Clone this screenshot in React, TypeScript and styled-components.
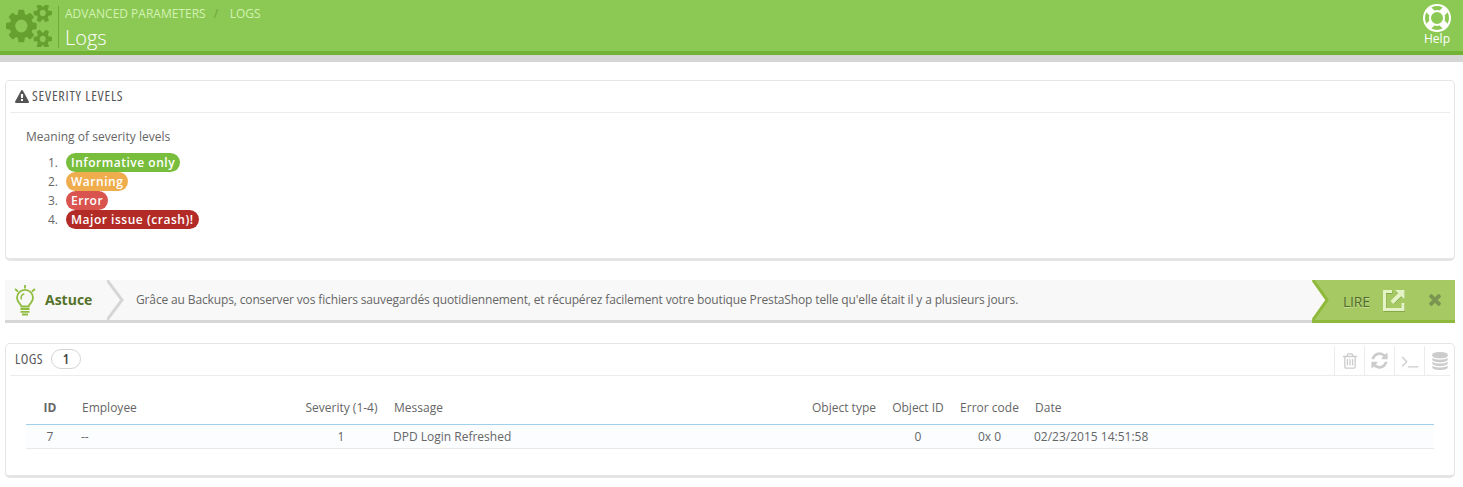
import React from "react";
import styled, { createGlobalStyle } from "styled-components";

const GlobalStyle = createGlobalStyle`
  *, *::before, *::after { box-sizing: border-box; }
  body {
    margin: 0;
    background: #fff;
    color: #666;
    font: 12px/19px "Open Sans", "Liberation Sans", sans-serif;
  }
`;

const COG =
  "M896 960q0-106-75-181t-181-75-181 75-75 181 75 181 181 75 181-75 75-181zm768 512q0-52-38-90t-90-38-90 38-38 90q0 53 37.5 90.5t90.5 37.5 90.5-37.5 37.5-90.5zm0-1024q0-52-38-90t-90-38-90 38-38 90q0 53 37.5 90.5t90.5 37.5 90.5-37.5 37.5-90.5zm-384 421v185q0 10-7 19.5t-16 10.5l-155 24q-11 35-32 76 34 48 90 115 7 11 7 20 0 12-7 19-23 30-82.5 89.5t-78.5 59.5q-11 0-21-7l-115-90q-37 19-77 31-11 108-23 155-7 24-30 24h-186q-11 0-20-7.5t-10-17.5l-23-153q-34-10-75-31l-118 89q-7 7-20 7-11 0-21-8-144-133-144-160 0-9 7-19 10-14 41-53t47-61q-23-44-35-82l-152-24q-10-1-17-9.5t-7-19.5v-185q0-10 7-19.5t16-10.5l155-24q11-35 32-76-34-48-90-115-7-11-7-20 0-12 7-20 22-30 82-89t79-59q11 0 21 7l115 90q34-18 77-32 11-108 23-154 7-24 30-24h186q11 0 20 7.5t10 17.5l23 153q34 10 75 31l118-89q8-7 20-7 11 0 21 8 144 133 144 160 0 8-7 19-12 16-42 54t-45 60q23 48 34 82l152 23q10 2 17 10.5t7 19.5zm640 533v140q0 16-149 31-12 27-30 52 51 113 51 138 0 4-4 7-122 71-124 71-8 0-46-47t-52-68q-20 2-30 2t-30-2q-14 21-52 68t-46 47q-2 0-124-71-4-3-4-7 0-25 51-138-18-25-30-52-149-15-149-31v-140q0-16 149-31 13-29 30-52-51-113-51-138 0-4 4-7 4-2 35-20t59-34 30-16q8 0 46 46.5t52 67.5q20-2 30-2t30 2q51-71 92-112l6-2q4 0 124 70 4 3 4 7 0 25-51 138 17 23 30 52 149 15 149 31zm0-1024v140q0 16-149 31-12 27-30 52 51 113 51 138 0 4-4 7-122 71-124 71-8 0-46-47t-52-68q-20 2-30 2t-30-2q-14 21-52 68t-46 47q-2 0-124-71-4-3-4-7 0-25 51-138-18-25-30-52-149-15-149-31v-140q0-16 149-31 13-29 30-52-51-113-51-138 0-4 4-7 4-2 35-20t59-34 30-16q8 0 46 46.5t52 67.5q20-2 30-2t30 2q51-71 92-112l6-2q4 0 124 70 4 3 4 7 0 25-51 138 17 23 30 52 149 15 149 31z";
const RING =
  "M896 0q182 0 348 71t286 191 191 286 71 348-71 348-191 286-286 191-348 71-348-71-286-191-191-286-71-348 71-348 191-286 286-191 348-71zm0 128q-190 0-361 90l194 194q82-28 167-28t167 28l194-194q-171-90-361-90zm-678 1129l194-194q-28-82-28-167t28-167l-194-194q-90 171-90 361t90 361zm678 407q190 0 361-90l-194-194q-82 28-167 28t-167-28l-194 194q171 90 361 90zm0-384q159 0 271.5-112.5t112.5-271.5-112.5-271.5-271.5-112.5-271.5 112.5-112.5 271.5 112.5 271.5 271.5 112.5zm484-217l194 194q90-171 90-361t-90-361l-194 194q28 82 28 167t-28 167z";
const WARNING =
  "M1024 1375v-190q0-14-9.5-23.5t-22.5-9.5h-192q-13 0-22.5 9.5t-9.5 23.5v190q0 14 9.5 23.5t22.5 9.5h192q13 0 22.5-9.5t9.5-23.5zm-2-374l18-459q0-12-10-19-13-11-24-11h-220q-11 0-24 11-10 7-10 21l17 457q0 10 10 16.5t24 6.5h185q14 0 23.5-6.5t10.5-16.5zm-14-934l768 1408q35 63-2 126-17 29-46.5 46t-63.5 17h-1536q-34 0-63.5-17t-46.5-46q-37-63-2-126l768-1408q17-31 47-49t65-18 65 18 47 49z";
const TRASH =
  "M704 736v576q0 14-9 23t-23 9h-64q-14 0-23-9t-9-23v-576q0-14 9-23t23-9h64q14 0 23 9t9 23zm256 0v576q0 14-9 23t-23 9h-64q-14 0-23-9t-9-23v-576q0-14 9-23t23-9h64q14 0 23 9t9 23zm256 0v576q0 14-9 23t-23 9h-64q-14 0-23-9t-9-23v-576q0-14 9-23t23-9h64q14 0 23 9t9 23zm128 724v-948h-896v948q0 22 7 40.5t14.5 27 10.5 8.5h832q3 0 10.5-8.5t14.5-27 7-40.5zm-672-1076h448l-48-117q-7-9-17-11h-317q-10 2-17 11zm928 32v64q0 14-9 23t-23 9h-96v948q0 83-47 143.5t-113 60.5h-832q-66 0-113-58.5t-47-141.5v-952h-96q-14 0-23-9t-9-23v-64q0-14 9-23t23-9h309l70-167q15-37 54-63t79-26h320q40 0 79 26t54 63l70 167h309q14 0 23 9t9 23z";
const REFRESH =
  "M1639 1056q0 5-1 7-64 268-268 434.5t-478 166.5q-146 0-282.5-55t-243.5-157l-129 129q-19 19-45 19t-45-19-19-45v-448q0-26 19-45t45-19h448q26 0 45 19t19 45-19 45l-137 137q71 66 161 102t187 36q134 0 250-65t186-179q11-17 53-117 8-23 30-23h192q13 0 22.5 9.5t9.5 22.5zm25-800v448q0 26-19 45t-45 19h-448q-26 0-45-19t-19-45 19-45l138-138q-148-137-349-137-134 0-250 65t-186 179q-11 17-53 117-8 23-30 23h-199q-13 0-22.5-9.5t-9.5-22.5v-7q65-268 270-434.5t480-166.5q146 0 284 55.5t245 156.5l130-129q19-19 45-19t45 19 19 45z";
const TERMINAL =
  "M649 983l-466 466q-10 10-23 10t-23-10l-50-50q-10-10-10-23t10-23l393-393-393-393q-10-10-10-23t10-23l50-50q10-10 23-10t23 10l466 466q10 10 10 23t-10 23zm1079 457v64q0 14-9 23t-23 9h-960q-14 0-23-9t-9-23v-64q0-14 9-23t23-9h960q14 0 23 9t9 23z";
const DISK =
  "q237 0 443-43t325-127v170q0 69-103 128t-280 93.5-385 34.5-385-34.5-280-93.5-103-128v-170q119 84 325 127t443 43z";
const DATABASE = `M896 768${DISK}M896 1536${DISK}M896 1152${DISK}M896 0q208 0 385 34.5t280 93.5 103 128v128q0 69-103 128t-280 93.5-385 34.5-385-34.5-280-93.5-103-128v-128q0-69 103-128t280-93.5 385-34.5z`;
const TIMES =
  "M1490 1322q0 40-28 68l-136 136q-28 28-68 28t-68-28l-294-294-294 294q-28 28-68 28t-68-28l-136-136q-28-28-28-68t28-68l294-294-294-294q-28-28-28-68t28-68l136-136q28-28 68-28t68 28l294 294 294-294q28-28 68-28t68 28l136 136q28 28 28 68t-28 68l-294 294 294 294q28 28 28 68z";

type GlyphProps = { d: string; box?: string; w: number; h: number };
const Svg = styled.svg`
  display: block;
  flex: none;
  fill: currentColor;
`;
const Glyph = ({ d, box = "0 0 1792 1792", w, h }: GlyphProps) => (
  <Svg width={w} height={h} viewBox={box} preserveAspectRatio="none">
    <path d={d} />
  </Svg>
);

const Header = styled.header`
  display: flex;
  height: 62px;
  padding: 0 12px 0 6px;
  background: linear-gradient(#8cc954 0 51px, #72b235 51px 55px, #d6d6d6 55px 62px);
  color: #fff;
`;
const SectionIcon = styled.div`
  width: 46px;
  padding-top: 5px;
  color: #66a02f;
`;
const Titles = styled.div`
  flex: 1;
  height: 42px;
  margin: 6px 0 0 6px;
  padding-left: 6px;
  border-left: 1px solid #6daa36;
`;
const Breadcrumb = styled.nav`
  display: flex;
  height: 16px;
  line-height: 16px;
  color: #d3f2b2;
  white-space: pre;
`;
const Slash = styled.span`
  width: 24px;
  padding-left: 8px;
  color: #6ba338;
`;
const Title = styled.h1`
  margin: 2px 0 0;
  font-size: 20px;
  font-weight: 300;
  line-height: 28px;
`;
const Help = styled.div`
  display: flex;
  flex-direction: column;
  align-items: center;
  padding-top: 4px;
  line-height: 14px;
  font-weight: 500;
`;

const Panel = styled.section<{ $h: number; $top: number }>`
  height: ${(p) => p.$h}px;
  margin: ${(p) => p.$top}px 8px 0 5px;
  padding: 0 4px;
  border: 1px solid #e5e5e5;
  border-bottom-width: 3px;
  border-radius: 5px;
`;
const PanelHead = styled.div`
  display: flex;
  align-items: center;
  height: 32px;
  padding-left: 5px;
  border-bottom: 1px solid #ececec;
  color: #555;
`;
const Condensed = styled.h2<{ $w: number; $gap?: number; $spacing: number }>`
  width: ${(p) => p.$w}px;
  margin: 0 0 2px ${(p) => p.$gap ?? 0}px;
  font-size: 14px;
  font-weight: 400;
  font-stretch: 75%;
  letter-spacing: ${(p) => p.$spacing}px;
  line-height: 20px;
  white-space: nowrap;
`;
const Intro = styled.p`
  margin: 14px 0 7px 16px;
  letter-spacing: 0.02px;
`;
const Levels = styled.ol`
  margin: 0 0 0 36px;
  padding: 0;
  list-style: none;
  counter-reset: level;
`;
const Level = styled.li`
  display: flex;
  height: 19px;
  counter-increment: level;
  &::before {
    content: counter(level) ".";
    width: 12px;
    margin-right: 8px;
    text-align: right;
  }
`;
const Badge = styled.span<{ $c: string }>`
  height: 19px;
  padding: 0 5px;
  border-radius: 10px;
  background: ${(p) => p.$c};
  color: #fff;
  font-weight: 600;
  letter-spacing: 0.52px;
`;

const Tip = styled.section`
  display: flex;
  height: 43px;
  margin: 19px 8px 0 5px;
  background: #f8f8f8;
  border-bottom: 3px solid #d6d6d6;
`;
const TipLabel = styled.strong`
  display: flex;
  align-items: center;
  gap: 9px;
  width: 102px;
  padding-left: 9px;
  color: #55732a;
  font-size: 14px;
`;
const TipName = styled.span`
  margin-bottom: 2px;
`;
const TipText = styled.p`
  flex: 1;
  margin: 0 0 0 11px;
  line-height: 40px;
  letter-spacing: -0.137px;
`;
const TipAction = styled.div`
  display: flex;
  align-items: center;
  width: 143px;
  height: 43px;
  background: #a6c964;
  border-bottom: 3px solid #8fb93a;
  color: #51692b;
  font-size: 14px;
`;
const Read = styled.span`
  width: 40px;
  margin-left: 14px;
  padding-top: 3px;
  letter-spacing: -0.2px;
  text-shadow: 0 1px 0 #c9e09a;
`;
const Share = styled.span`
  padding-top: 1px;
`;
const Close = styled.span`
  margin-left: 24px;
  color: #7a9550;
`;

const Count = styled.span`
  width: 30px;
  height: 20px;
  border: 1px solid #d5d5d5;
  border-radius: 10px;
  margin-bottom: 1px;
  color: #444;
  font-size: 14px;
  font-weight: 600;
  font-stretch: 85%;
  line-height: 17px;
  text-align: center;
`;
const Tools = styled.div`
  display: flex;
  align-self: flex-end;
  height: 29px;
  margin-left: auto;
`;
const Tool = styled.div`
  display: flex;
  align-items: center;
  justify-content: center;
  width: 30px;
  border-left: 1px solid #ececec;
  color: #ccc;
  &:last-child { width: 26px; padding-left: 5px; }
`;
const Table = styled.table`
  width: 1408px;
  margin: 16px 0 0 16px;
  border-collapse: separate;
  border-spacing: 0;
  table-layout: fixed;
`;
const Th = styled.th<{ $w: number; $bold?: boolean; $center?: boolean; $indent?: number }>`
  width: ${(p) => p.$w}px;
  height: 33px;
  padding: 0 0 2px ${(p) => p.$indent ?? 0}px;
  border-bottom: 1px solid #a0d0eb;
  font-weight: ${(p) => (p.$bold ? 700 : 400)};
  text-align: ${(p) => (p.$center ? "center" : "left")};
  white-space: nowrap;
`;
const Td = styled.td<{ $center?: boolean }>`
  height: 24px;
  padding: 0;
  background: #fbfdff;
  border-bottom: 1px solid #e6e9ec;
  text-align: ${(p) => (p.$center ? "center" : "left")};
`;

const levels = [
  ["Informative only", "#79bd3c"],
  ["Warning", "#f0ad4e"],
  ["Error", "#d9534f"],
  ["Major issue (crash)!", "#b32b27"],
];

const columns = [
  { label: "ID", value: "7", w: 48, center: true, bold: true },
  { label: "", value: "", w: 7 },
  { label: "Employee", value: "--", w: 216, indent: 1 },
  { label: "Severity (1-4)", value: "1", w: 88, center: true, indent: 1 },
  { label: "", value: "", w: 8 },
  { label: "Message", value: "DPD Login Refreshed", w: 410, indent: 1 },
  { label: "Object type", value: "", w: 81, center: true, indent: 1 },
  { label: "Object ID", value: "0", w: 68, center: true },
  { label: "Error code", value: "0x 0", w: 75, center: true },
  { label: "", value: "", w: 7 },
  { label: "Date", value: "02/23/2015 14:51:58", w: 400, indent: 1 },
];

export default function App() {
  return (
    <>
      <GlobalStyle />
      <Header>
        <SectionIcon>
          <Glyph d={COG} box="0 128 1920 1664" w={46} h={42} />
        </SectionIcon>
        <Titles>
          <Breadcrumb>
            <span>ADVANCED PARAMETERS</span>
            <Slash>/</Slash>
            <span>LOGS</span>
          </Breadcrumb>
          <Title>Logs</Title>
        </Titles>
        <Help>
          <Glyph d={RING} w={28} h={28} />
          Help
        </Help>
      </Header>

      <Panel $top={18} $h={181}>
        <PanelHead>
          <Glyph d={WARNING} w={14} h={14} />
          <Condensed $w={100} $gap={3} $spacing={0.83}>SEVERITY LEVELS</Condensed>
        </PanelHead>
        <Intro>Meaning of severity levels</Intro>
        <Levels>
          {levels.map(([name, color]) => (
            <Level key={name}>
              <Badge $c={color}>{name}</Badge>
            </Level>
          ))}
        </Levels>
      </Panel>

      <Tip>
        <TipLabel>
          <Svg width="22" height="31" viewBox="0 0 22 31">
            <g fill="none" stroke="#8fbc3f" strokeWidth="1.8">
              <path d="M7.3 21.5C7 18.5 3 17.5 3 12.8a8 8 0 0 1 16 0c0 4.700-4 5.700-4.300 8.700z" />
              <path d="M7.500 14.500c-1.200-2.500.2-5.200 2.800-5.800" strokeWidth="1.400" />
              <path d="M11 0v3.500M1 4l3 2.500M21 4l-3 2.500M6.500 24h9M6.500 26.800h9M8 29.500h6" />
            </g>
          </Svg>
          <TipName>Astuce</TipName>
        </TipLabel>
        <Svg width="18" height="40" viewBox="0 0 18 40">
          <path d="M0 0L15 20L0 40" fill="none" stroke="#d6d6d6" strokeWidth="3" />
        </Svg>
        <TipText>
          Grâce au Backups, conserver vos fichiers sauvegardés quotidiennement, et récupérez
          facilement votre boutique PrestaShop telle qu'elle était il y a plusieurs jours.
        </TipText>
        <TipAction>
          <Svg width="17" height="40" viewBox="0 0 17 40">
            <path d="M0 0L14 20L0 40z" fill="#f8f8f8" />
            <path d="M1 0L15 20L1 40" fill="none" stroke="#8fb93a" strokeWidth="3" />
          </Svg>
          <Read>LIRE</Read>
          <Share>
            <Svg width="22" height="22" viewBox="0 0 22 22">
              <g fill="none" stroke="#86a84b" strokeWidth="3" transform="translate(.5 1)">
                <path d="M9 1.500H1.500V19.500H20V13M10 12L17 5" />
                <path d="M12 0h9v9z" fill="#86a84b" stroke="none" />
              </g>
              <g fill="none" stroke="#e4f3c6" strokeWidth="3">
                <path d="M9 1.500H1.500V19.500H20V13" />
                <path d="M9 12.500L17 4.500" strokeWidth="4" />
                <path d="M12 0h9.500v9.500z" fill="#e4f3c6" stroke="none" />
              </g>
            </Svg>
          </Share>
          <Close>
            <Glyph d={TIMES} box="302 366 1188 1188" w={12} h={12} />
          </Close>
        </TipAction>
      </Tip>

      <Panel $top={20} $h={135}>
        <PanelHead>
          <Condensed $w={36} $spacing={0.5}>LOGS</Condensed>
          <Count>1</Count>
          <Tools>
            <Tool><Glyph d={TRASH} w={18} h={18} /></Tool>
            <Tool><Glyph d={REFRESH} w={19} h={19} /></Tool>
            <Tool><Glyph d={TERMINAL} w={18} h={18} /></Tool>
            <Tool><Glyph d={DATABASE} w={18} h={18} /></Tool>
          </Tools>
        </PanelHead>
        <Table>
          <thead>
            <tr>
              {columns.map((c, i) => (
                <Th key={i} $w={c.w} $bold={c.bold} $center={c.center} $indent={c.indent}>{c.label}</Th>
              ))}
            </tr>
          </thead>
          <tbody>
            <tr>
              {columns.map((c, i) => (
                <Td key={i} $center={c.center}>{c.value}</Td>
              ))}
            </tr>
          </tbody>
        </Table>
      </Panel>
    </>
  );
}
